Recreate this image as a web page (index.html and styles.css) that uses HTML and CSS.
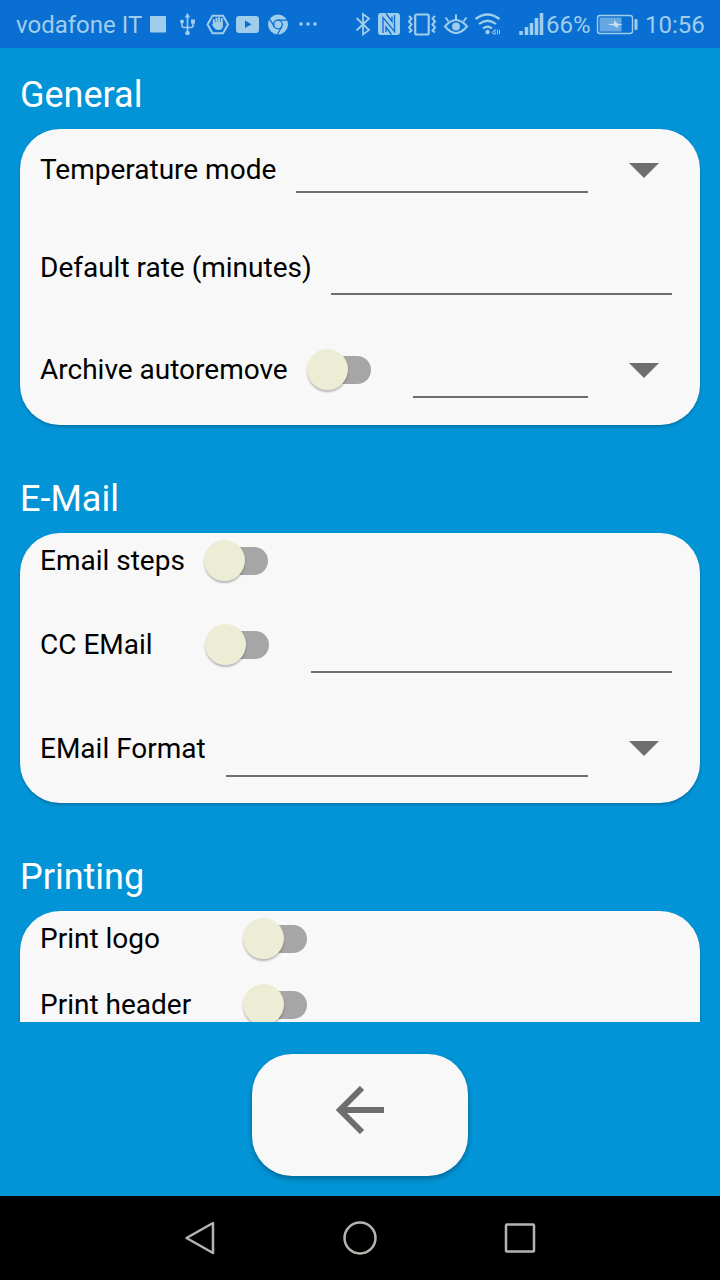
FILE: index.html
```html
<!doctype html>
<html lang="en">
	<head>
		<meta charset="UTF-8" />
		<meta name="viewport" content="width=device-width, initial-scale=1.0" />
		<title>Settings</title>
		<link rel="stylesheet" href="styles.css">
	</head>
	<body>
		<header class="status-bar">
			<span class="carrier">vodafone IT</span>
			<svg class="status-icons" width="172" height="48" viewBox="148 0 172 48">
				<rect x="150" y="16" width="16" height="16.500" rx="1" fill="currentColor" />
				<!-- usb -->
				<g fill="none" stroke="currentColor" stroke-width="1.600">
					<path d="M187.500 17v15M182 22v3.500q0 2 2 2h7q2 0 2-2V22" />
				</g>
				<g fill="currentColor">
					<path d="M187.500 13l2.800 4.500h-5.600z" />
					<circle cx="187.500" cy="33" r="2.300" />
					<circle cx="182" cy="21.500" r="2" />
					<rect x="191" y="19.500" width="4" height="4" />
				</g>
				<!-- blocker -->
				<path d="M212.500 15.700h10.500l5 8.800-5 8.800h-10.500l-5-8.800z" fill="none" stroke="currentColor" stroke-width="2" />
				<path d="M213 19v5M215.700 17.500v6M218.300 17v6M221 18v6" transform="translate(.8 1)" stroke="currentColor" stroke-width="2" stroke-linecap="round" />
				<path d="M211.500 24l2.500 1v-3h8.800v4q0 4-4.300 4-3 0-4.500-2.500z" fill="currentColor" />
				<!-- video -->
				<path fill="currentColor" fill-rule="evenodd" d="M239 16h17q3 0 3 3v11q0 3-3 3h-17q-3 0-3-3V19q0-3 3-3zM245 20.500v7.500l6.500-3.750z" />
				<!-- browser -->
				<circle cx="278" cy="24.500" r="10" fill="currentColor" />
				<g fill="none" stroke="#0a6fd2" stroke-width="1.300">
					<circle cx="278" cy="24.500" r="4.300" />
					<path d="M278 20.200h9.500M274.300 26.700l-5-8M281.700 26.700l-4.500 8" />
				</g>
				<g fill="currentColor">
					<circle cx="301" cy="24" r="1.800" />
					<circle cx="308" cy="24" r="1.800" />
					<circle cx="315" cy="24" r="1.800" />
				</g>
			</svg>
			<svg class="status-right" width="192" height="48" viewBox="354 0 192 48" fill="none" stroke="currentColor">
				<path d="M356.500 18l12.500 12-6 4.500v-20.500l6 4.500-12.500 12" stroke-width="1.800" />
				<!-- nfc -->
				<rect x="378" y="13" width="22" height="22" rx="3" fill="currentColor" stroke="none" />
				<path d="M383 33V17.500l11.500 14V15M386 13.500l6 8V16.500M391.500 34.500l-5.500-7.500v5" stroke="#0a6fd2" stroke-width="1.300" />
				<!-- vibrate -->
				<rect x="415.200" y="14.500" width="13.500" height="20" rx="1.500" stroke-width="2.200" />
				<path d="M409 16l2.500 2.500-2.500 3 2.500 3-2.500 3 2.500 3-2.500 2M435 16l-2.500 2.500 2.500 3-2.500 3 2.500 3-2.500 3 2.500 2" stroke-width="2" />
				<!-- eye comfort -->
				<path d="M445 26.500q11-13 22 0-11 13-22 0zM456 20v-5.500M448.500 21.500l-3-4M463.500 21.500l3-4" stroke-width="2" />
				<circle cx="456" cy="26.500" r="4" fill="currentColor" stroke="none" />
				<!-- wifi -->
				<path d="M475.500 19q12-9 24 0M479 24q8.500-6.500 17 0M483 28.500q4.500-3.500 9 0" stroke-width="2.200" />
				<circle cx="487.500" cy="32" r="2.200" fill="currentColor" stroke="none" />
				<path d="M492 32.500l3-3v5zM497.500 29.500v5M499.500 30v4" stroke-width="1" />
				<path d="M521 31v4M526.500 27v8M531.500 23v12M536.500 18v17M541.500 13v22" stroke-width="3.500" />
			</svg>
			<span class="percent">66%</span>
			<svg class="battery" width="42" height="48" viewBox="596 0 42 48">
				<rect x="597.500" y="15.500" width="35" height="18" rx="2.500" fill="none" stroke="currentColor" stroke-width="1.400" />
				<rect x="599.500" y="17.500" width="22" height="14" fill="currentColor" opacity=".6" />
				<path d="M607 24.500l7-1v-3.500l3.500 3.500 5.500 1-5.500 1v3l-3.500-3z" fill="#c7e1f2" />
				<rect x="634.500" y="19" width="3" height="11" rx="1" fill="currentColor" />
			</svg>
			<span class="clock">10:56</span>
		</header>

		<main class="settings">
			<section>
				<h2>General</h2>
				<div class="card">
					<div class="row row-temperature">
						<label>Temperature mode</label>
						<span class="field"></span>
						<span class="arrow"></span>
					</div>
					<div class="row row-rate">
						<label>Default rate (minutes)</label>
						<span class="field"></span>
					</div>
					<div class="row row-archive">
						<label>Archive autoremove</label>
						<span class="switch"></span>
						<span class="field"></span>
						<span class="arrow"></span>
					</div>
				</div>
			</section>

			<section>
				<h2>E-Mail</h2>
				<div class="card email">
					<div class="row row-steps">
						<label>Email steps</label>
						<span class="switch"></span>
					</div>
					<div class="row row-cc">
						<label>CC EMail</label>
						<span class="switch"></span>
						<span class="field"></span>
					</div>
					<div class="row row-format">
						<label>EMail Format</label>
						<span class="field"></span>
						<span class="arrow"></span>
					</div>
				</div>
			</section>

			<section>
				<h2>Printing</h2>
				<div class="card printing">
					<div class="row row-print">
						<label>Print logo</label>
						<span class="switch"></span>
					</div>
					<div class="row row-print">
						<label>Print header</label>
						<span class="switch"></span>
					</div>
				</div>
			</section>
		</main>

		<footer class="actions">
			<button class="back-button" aria-label="Back">
				<svg width="48" height="48" viewBox="0 0 48 48" fill="none" stroke="#6e6e6e" stroke-width="6">
					<path d="M48 24H5M26 2L4 24l22 22" />
				</svg>
			</button>
		</footer>

		<nav class="nav-bar">
			<svg width="40" height="40" viewBox="0 0 40 40"><path d="M6.500 20L33 5v30z" /></svg>
			<svg width="40" height="40" viewBox="0 0 40 40"><circle cx="20" cy="20" r="15.500" /></svg>
			<svg width="40" height="40" viewBox="0 0 40 40"><rect x="6" y="6.500" width="28" height="27" rx="1" /></svg>
		</nav>
	</body>
</html>
```
FILE: styles.css
```css
* {
	box-sizing: border-box;
}
body {
	margin: 0;
	width: 720px;
	height: 1280px;
	display: flex;
	flex-direction: column;
	overflow: hidden;
	background-color: #0294d6;
	font-family: Roboto, sans-serif;
	color: #000;
}
.status-bar {
	display: flex;
	align-items: center;
	flex: none;
	height: 48px;
	padding-left: 16px;
	background-color: #0a6fd2;
	color: #a0cdeb;
	font-size: 24px;
	line-height: 48px;
	white-space: nowrap;
}
.status-bar span {
	flex: none;
	padding-top: 2px;
}
.status-bar svg {
	flex: none;
}
.carrier {
	width: 132px;
}
.status-right {
	margin-left: 34px;
}
.percent {
	width: 50px;
}
.clock {
	margin-left: 7px;
}
.settings {
	flex: none;
	height: 974px;
	padding: 0 20px;
	overflow: hidden;
}
h2 {
	margin: 0;
	height: 81px;
	padding-top: 26px;
	font-size: 36px;
	font-weight: 400;
	line-height: 42px;
	color: #fff;
}
section + section h2 {
	height: 108px;
	padding-top: 53px;
}
.card {
	height: 296px;
	border-radius: 40px;
	padding: 0 28px 0 20px;
	background-color: #f8f8f8;
	box-shadow: 0 2px 3px rgba(0, 0, 0, 0.2);
	overflow: hidden;
}
.email {
	height: 270px;
}
.printing {
	height: 300px;
}
.row {
	display: flex;
	align-items: center;
	height: 82px;
}
.row label {
	flex: none;
	font-size: 28px;
	line-height: 34px;
	white-space: nowrap;
}
.field {
	flex: 1;
	align-self: flex-end;
	border-bottom: 2px solid #6e6e6e;
}
.arrow {
	flex: none;
	margin: 0 13px 0 41px;
	border: 15px solid transparent;
	border-top-color: #6e6e6e;
	border-bottom: 0;
}
.switch {
	position: relative;
	flex: none;
	width: 64px;
	height: 28px;
	border-radius: 14px;
	background: linear-gradient(to right, transparent 20px, #a6a6a6 20px);
}
.switch::before {
	content: "";
	position: absolute;
	left: 0;
	top: -7px;
	width: 41px;
	height: 41px;
	border-radius: 50%;
	background-color: #ededd6;
	box-shadow: 0 2px 2px rgba(0, 0, 0, 0.25);
}
.row-temperature label {
	width: 256px;
}
.row-temperature .field {
	margin-bottom: 18px;
}
.row-rate {
	height: 114px;
}
.row-rate label {
	width: 291px;
}
.row-rate .field {
	margin-bottom: 30px;
}
.row-archive {
	height: 90px;
}
.row-archive label {
	width: 267px;
}
.row-archive .field {
	margin: 0 0 17px 42px;
}
.row-steps {
	height: 56px;
}
.row-steps label {
	width: 164px;
}
.row-cc {
	height: 112px;
}
.row-cc label {
	width: 165px;
}
.row-cc .field {
	margin: 0 0 28px 42px;
}
.row-format {
	height: 95px;
}
.row-format label {
	width: 186px;
}
.row-format .field {
	margin-bottom: 19px;
}
.row-print {
	height: 56px;
}
.row-print + .row-print {
	height: 76px;
}
.row-print label {
	width: 203px;
}
.actions {
	flex: none;
	display: flex;
	justify-content: center;
	height: 174px;
	padding-top: 32px;
}
.back-button {
	display: flex;
	justify-content: center;
	width: 216px;
	height: 122px;
	border: none;
	border-radius: 40px;
	padding: 32px 0 0;
	background-color: #f8f8f8;
	box-shadow: 0 3px 5px rgba(0, 0, 0, 0.28);
}
.nav-bar {
	flex: none;
	display: flex;
	justify-content: center;
	align-items: center;
	gap: 120px;
	height: 84px;
	background-color: #000;
}
.nav-bar svg {
	fill: none;
	stroke: #b5b5b0;
	stroke-width: 2.5;
	stroke-linejoin: round;
}
```
